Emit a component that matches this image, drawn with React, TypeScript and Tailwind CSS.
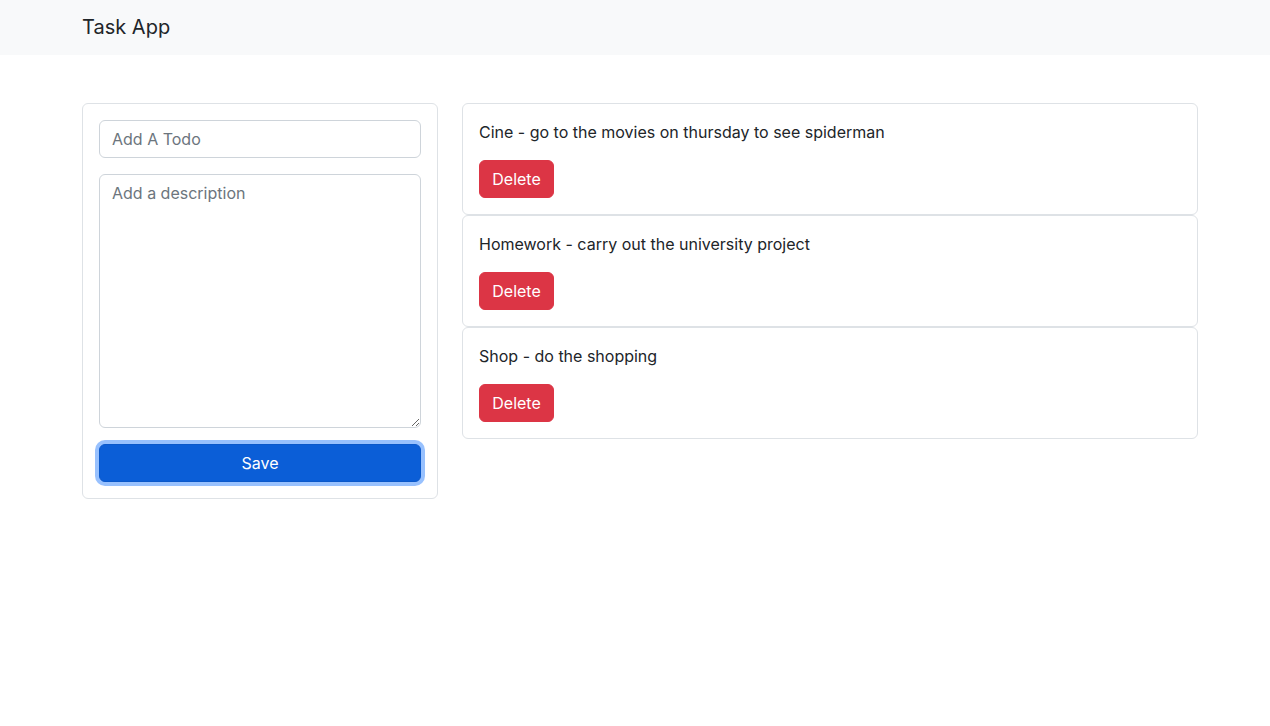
import React from "react";

const todos = [
  { title: "Cine", description: "go to the movies on thursday to see spiderman" },
  { title: "Homework", description: "carry out the university project" },
  { title: "Shop", description: "do the shopping" },
];

export default function App() {
  return (
    <div className="min-h-[726px] bg-white text-[#212529] font-['Inter','Noto_Sans',sans-serif] text-base leading-6">
      <nav className="h-[55px] bg-[#f8f9fa] flex items-center">
        <div className="w-[1116px] ml-[82px] pb-[2px]">
          <span className="text-xl leading-[30px] text-[#212529]">Task App</span>
        </div>
      </nav>
      <div className="w-[1116px] ml-[82px] mt-12 flex gap-6 items-start">
        <div className="w-[356px] border border-[#dee2e6] rounded-md p-4 flex flex-col">
          <input
            placeholder="Add A Todo"
            className="h-[38px] border border-[#ced4da] rounded-md px-3 text-base placeholder:text-[#6c757d] outline-none"
          />
          <textarea
            placeholder="Add a description"
            className="mt-4 h-[254px] border border-[#ced4da] rounded-md px-3 py-[6px] text-base placeholder:text-[#6c757d] outline-none"
          />
          <button className="mt-4 h-[38px] bg-[#0b5ed7] border border-[#0a58ca] text-white rounded-md text-base ring-4 ring-[#98c1fe]">
            Save
          </button>
        </div>
        <div className="flex-1 flex flex-col">
          {todos.map((t) => (
            <div key={t.title} className="h-[112px] border border-[#dee2e6] rounded-md p-4">
              <p className="mb-4 leading-6">
                {t.title} - {t.description}
              </p>
              <button className="h-[38px] w-[75px] bg-[#dc3545] border border-[#dc3545] text-white rounded-md text-base">
                Delete
              </button>
            </div>
          ))}
        </div>
      </div>
    </div>
  );
}
